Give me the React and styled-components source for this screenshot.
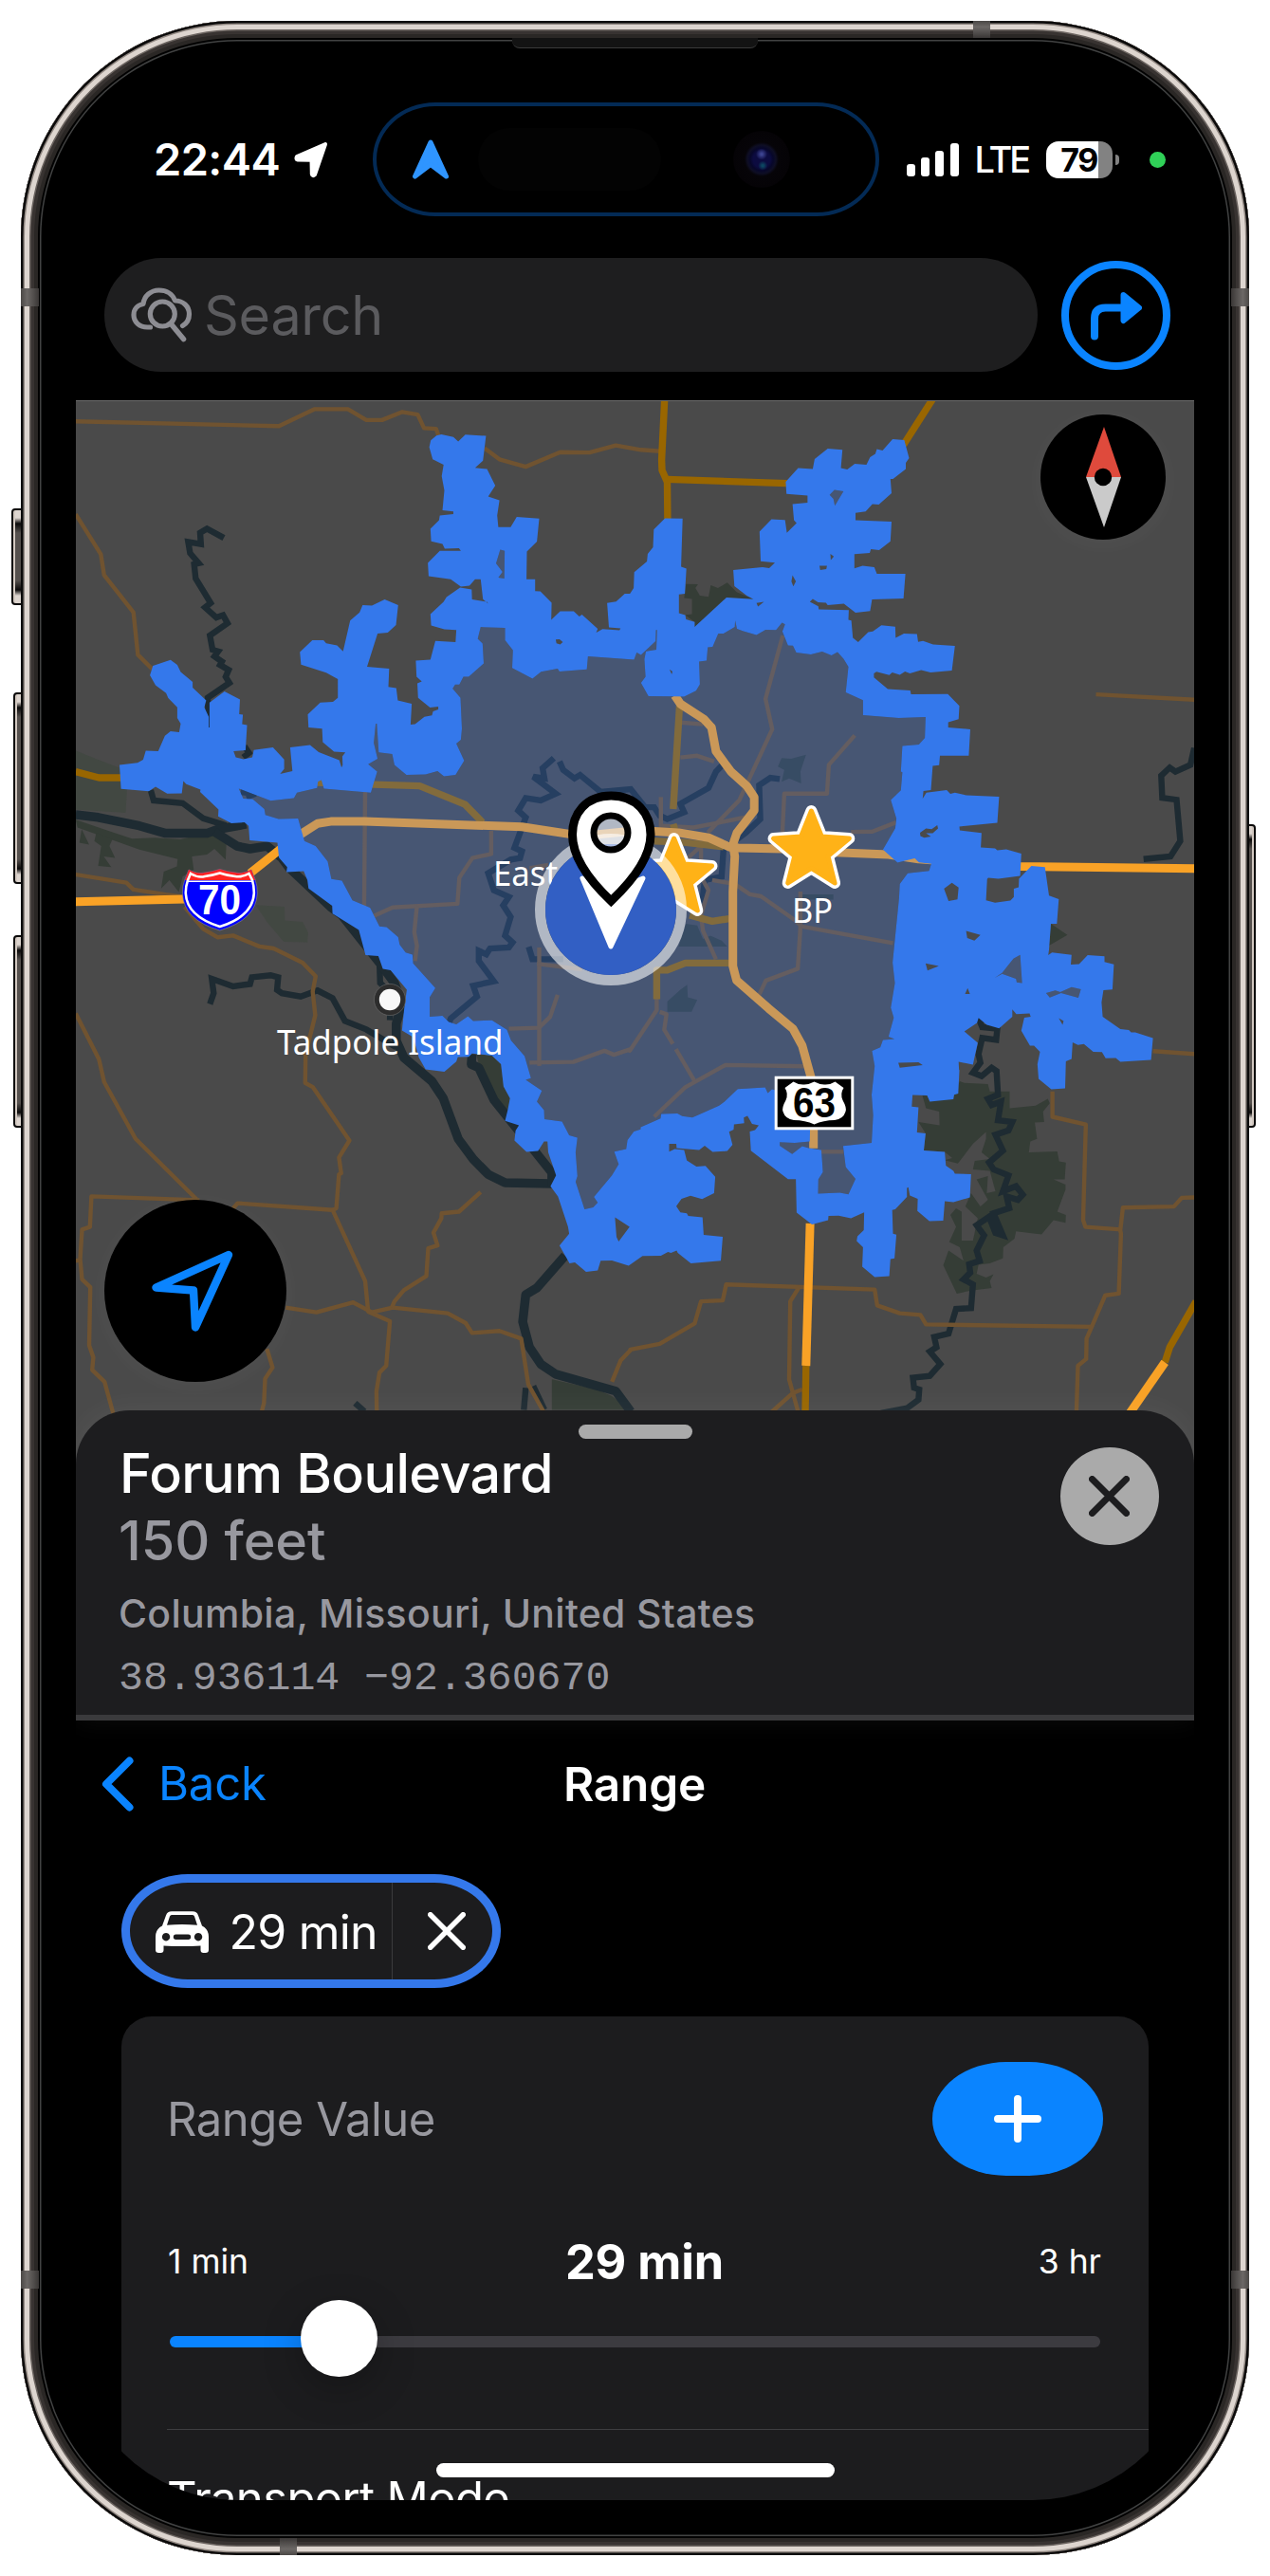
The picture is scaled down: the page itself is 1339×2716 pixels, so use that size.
import React from "react";
import styled, { createGlobalStyle } from "styled-components";

const BLUE = "#0a84ff";
const RANGE_BLUE = "#3478eb";

const GlobalStyle = createGlobalStyle`
  * { box-sizing: border-box; }
  body { margin: 0; background: #fff; font-family: Inter, "Liberation Sans", sans-serif; }
  button { border: 0; padding: 0; font: inherit; color: inherit; background: none; }
`;

/* ---------- device ---------- */

const Page = styled.main`
  position: relative;
  width: 1339px;
  height: 2716px;
  padding: 22px;
  overflow: hidden;
`;

const Phone = styled.div`
  position: relative;
  width: 1295px;
  height: 2672px;
  padding: 86px 58px 58px;
  border-radius: 228px;
  background: #000;
  box-shadow:
    inset 0 0 0 2.5px #0b0a0a,
    inset 0 0 0 4px #8f8680,
    inset 0 0 0 9px #ddd5cf,
    inset 0 0 0 10.5px #6b6460,
    inset 0 0 0 14px #383331,
    inset 0 0 0 18px #2a2725,
    inset 0 0 0 20px #020202,
    inset 0 0 0 21.5px #414242;
`;

const SideKey = styled.span`
  position: absolute;
  left: ${(p) => p.$x}px;
  top: ${(p) => p.$y}px;
  width: 16px;
  height: ${(p) => p.$h}px;
  border: 2px solid #0a0909;
  border-radius: 4px;
  background: linear-gradient(#ddd5cf 0 8px, #0a0909 14px, #55504d 24px, #55504d calc(100% - 24px), #0a0909 calc(100% - 14px), #ddd5cf calc(100% - 8px));
  box-shadow: inset ${(p) => (p.$right ? -2 : 2)}px 0 0 #d3c9c1;
`;

const Antenna = styled.span`
  position: absolute;
  left: ${(p) => p.$x}px;
  top: ${(p) => p.$y}px;
  width: ${(p) => (p.$vertical ? 18 : 19)}px;
  height: ${(p) => (p.$vertical ? 18 : 19)}px;
  background: linear-gradient(${(p) => p.$dir}, #4a4745, #6c6866 35%, #3a3736);
`;

const Earpiece = styled.span`
  position: absolute;
  left: 518px;
  top: 18px;
  width: 259px;
  height: 11px;
  border-radius: 0 0 8px 8px;
  background: #131313;
  border-bottom: 1.5px solid #3a3a3a;
`;

const Screen = styled.div`
  width: 1179px;
  height: 2528px;
  display: flex;
  flex-direction: column;
  overflow: hidden;
  border-radius: 0 0 170px 170px;
`;

/* ---------- status bar ---------- */

const StatusBar = styled.header`
  flex: none;
  height: 120px;
  display: flex;
  align-items: center;
  padding-left: 82px;
  color: #fff;
`;

const Clock = styled.span`
  width: 147px;
  font-size: 47px;
  line-height: 56px;
  font-weight: 600;
  letter-spacing: -0.6px;
  white-space: nowrap;
`;

const Island = styled.div`
  width: 534px;
  height: 120px;
  margin-left: 46px;
  padding-left: 38px;
  display: flex;
  align-items: center;
  border: 4.5px solid #032a55;
  border-radius: 66px / 60px;
`;

const Sensor = styled.span`
  width: 193px;
  height: 66px;
  margin-left: 31px;
  border-radius: 33px;
  background: #030303;
`;

const Lens = styled.span`
  width: 60px;
  height: 60px;
  margin-left: 76px;
  border-radius: 50%;
  background: radial-gradient(circle at 50% 41%, #3c4390 0 1px, transparent 6px),
    radial-gradient(circle at 52% 61%, #0d4560 0 1px, transparent 5px),
    radial-gradient(circle, #0c0b40 0 9px, #07072a 12px, #0e0e24 15px, #060408 18px, #050306 30px);
`;

const Bars = styled.div`
  display: flex;
  align-items: flex-end;
  gap: 6.2px;
  height: 35px;
  margin: 0 0 0 29px;
`;

const Bar = styled.span`
  width: 9px;
  height: ${(p) => p.$h}px;
  border-radius: 3px;
  background: #fff;
`;

const Carrier = styled.span`
  width: 59px;
  margin-left: 17px;
  font-size: 38px;
  line-height: 46px;
  font-weight: 500;
  letter-spacing: -3px;
  white-space: nowrap;
`;

const Battery = styled.div`
  position: relative;
  width: 70px;
  height: 39px;
  margin-left: 16px;
  border-radius: 13px;
  background: linear-gradient(90deg, #fff 79%, #828282 79%);
  color: #000;
  font-size: 34px;
  line-height: 39px;
  font-weight: 700;
  letter-spacing: -1.5px;
  text-align: center;
  &::after {
    content: "";
    position: absolute;
    right: -7px;
    top: 14px;
    width: 4px;
    height: 11px;
    border-radius: 0 4px 4px 0;
    background: #828282;
  }
`;

const CameraDot = styled.span`
  width: 17px;
  height: 17px;
  margin-left: 39px;
  border-radius: 50%;
  background: #30d158;
`;

/* ---------- search ---------- */

const SearchRow = styled.div`
  flex: none;
  height: 150px;
  margin-top: 44px;
  padding: 0 25px 0 30px;
  display: flex;
  align-items: flex-start;
  gap: 25px;
`;

const SearchField = styled.div`
  width: 984px;
  height: 120px;
  padding-left: 26px;
  display: flex;
  align-items: center;
  border-radius: 60px;
  background: #1e1e1f;
  color: #5b5b5e;
  font-size: 57.5px;
  letter-spacing: -0.3px;
`;

const SearchLabel = styled.span`
  margin-left: 11px;
`;

const RouteButton = styled.button`
  flex: none;
  width: 115px;
  height: 115px;
  margin-top: 3px;
  display: flex;
  align-items: center;
  justify-content: center;
  border: 8.5px solid ${BLUE};
  border-radius: 50%;
`;

/* ---------- map ---------- */

const MapArea = styled.section`
  position: relative;
  flex: none;
  height: 1140px;
  background: #4a4a4a;
  border-top: 1px solid #6a6a6a;
`;

const MapSvg = styled.svg`
  display: block;
  width: 1179px;
  height: 1139px;
`;

const RoundControl = styled.button`
  position: absolute;
  left: ${(p) => p.$x}px;
  top: ${(p) => p.$y}px;
  width: ${(p) => p.$size}px;
  height: ${(p) => p.$size}px;
  display: flex;
  align-items: center;
  justify-content: center;
  border-radius: 50%;
  background: #000;
  box-shadow: 0 4px 24px rgba(255, 255, 255, 0.04);
`;

/* ---------- place sheet ---------- */

const Sheet = styled.section`
  position: relative;
  flex: none;
  height: 327px;
  margin-top: -75px;
  padding-left: 46px;
  border-radius: 57px 57px 0 0;
  border-bottom: 6px solid #3a3a3c;
  background: #1d1d1f;
  box-shadow: 0 -2px 30px rgba(255, 255, 255, 0.06);
`;

const Grabber = styled.div`
  width: 120px;
  height: 15px;
  margin: 0 auto;
  position: relative;
  left: -23px;
  top: 15px;
  border-radius: 8px;
  background: #aaa;
`;

const SheetTop = styled.div`
  display: flex;
  justify-content: space-between;
  padding-right: 37.5px;
`;

const PlaceTitle = styled.h1`
  margin: 16px 0 0;
  font-size: 57.5px;
  line-height: 71.5px;
  font-weight: 500;
  letter-spacing: -0.6px;
  color: #fff;
`;

const Distance = styled.p`
  margin: -1px 0 0 -1px;
  font-size: 57.5px;
  line-height: 71.5px;
  font-weight: 500;
  letter-spacing: -0.1px;
  color: #98989f;
`;

const Address = styled.p`
  margin: 11px 0 0 -1px;
  font-size: 41px;
  line-height: 60px;
  font-weight: 500;
  letter-spacing: 0.28px;
  color: #98989f;
`;

const Coordinates = styled.p`
  margin: 9px 0 0 -1px;
  font-family: "Liberation Mono", monospace;
  font-size: 43.2px;
  line-height: 60px;
  color: #98989f;
`;

const CloseButton = styled.button`
  flex: none;
  width: 103.5px;
  height: 103.5px;
  margin-top: 23.5px;
  display: flex;
  align-items: center;
  justify-content: center;
  border-radius: 50%;
  background: #aaa;
`;

/* ---------- range panel ---------- */

const NavBar = styled.nav`
  flex: none;
  height: 132px;
  display: grid;
  grid-template-columns: 1fr auto 1fr;
  align-items: center;
  padding: 2px 28px 0 27px;
  font-size: 49px;
  line-height: 60px;
  color: #fff;
`;

const BackButton = styled.button`
  display: flex;
  align-items: center;
  gap: 26px;
  color: ${BLUE};
  letter-spacing: -0.2px;
`;

const NavTitle = styled.h2`
  margin: 0;
  font-size: 49.5px;
  font-weight: 600;
  letter-spacing: -0.2px;
`;

const Chip = styled.div`
  flex: none;
  width: 400px;
  height: 120px;
  margin: 30px 0 30px 48px;
  display: flex;
  border: 9px solid ${RANGE_BLUE};
  border-radius: 70px / 60px;
  background: #1c1c1e;
  color: #fff;
  font-size: 50px;
`;

const ChipMain = styled.div`
  width: 277px;
  padding: 2px 0 0 27px;
  display: flex;
  align-items: center;
  gap: 21.5px;
  border-right: 1px solid #3a3a3c;
  white-space: nowrap;
  letter-spacing: -0.8px;
`;

const ChipClose = styled.button`
  flex: 1;
  display: flex;
  align-items: center;
  justify-content: center;
  padding-left: 8px;
`;

const Card = styled.section`
  flex: none;
  width: 1083px;
  height: 600px;
  margin-left: 48px;
  padding: 48px 0 0 48px;
  border-radius: 32px 32px 0 0;
  background: #1c1c1e;
  color: #fff;
`;

const CardHeader = styled.div`
  display: flex;
  align-items: center;
  justify-content: space-between;
  padding-right: 48px;
  font-size: 49px;
  letter-spacing: -0.5px;
  color: #98989f;
`;

const AddButton = styled.button`
  width: 180px;
  height: 120px;
  display: flex;
  align-items: center;
  justify-content: center;
  border-radius: 78px / 60px;
  background: ${BLUE};
`;

const Scale = styled.div`
  display: grid;
  grid-template-columns: 1fr auto 1fr;
  align-items: center;
  height: 60px;
  margin-top: 60px;
  padding: 0 50px 0 1px;
  font-size: 35.5px;
`;

const ScaleValue = styled.strong`
  padding-left: 21px;
  font-size: 50.5px;
  font-weight: 700;
  letter-spacing: -0.1px;
`;

const ScaleEnd = styled.span`
  text-align: right;
`;

const SliderBox = styled.div`
  height: 81px;
  margin: 11px 51px 0 3px;
  padding-top: 38px;
  position: relative;
`;

const Track = styled.div`
  height: 12px;
  border-radius: 6px;
  background: linear-gradient(90deg, ${BLUE} 18%, #3c3b40 18%);
`;

const Thumb = styled.div`
  position: absolute;
  left: 138px;
  top: 0;
  width: 81px;
  height: 81px;
  border-radius: 50%;
  background: #fff;
  box-shadow: 0 12px 40px rgba(0, 0, 0, 0.25);
`;

const NextRow = styled.div`
  margin-top: 55px;
  padding: 43px 0 0;
  border-top: 1px solid #3d3d40;
  font-size: 49px;
  line-height: 60px;
  letter-spacing: -0.65px;
`;

const HomeBar = styled.span`
  position: absolute;
  left: 438px;
  top: 2575px;
  width: 420px;
  height: 15px;
  border-radius: 8px;
  background: #fff;
`;

/* ---------- map data: four survey tiles, each 1568 units across ---------- */

const tile = (ox, oy) => (pts) =>
  pts
    .trim()
    .split(/\s+/)
    .map((p) => {
      const [x, y] = p.split(",").map(Number);
      return `${(ox + x / 2.529).toFixed(1)},${(oy + y / 2.8).toFixed(1)}`;
    })
    .join(" ");

const NW = tile(60, 410);
const NE = tile(660, 410);
const SW = tile(60, 940);
const SE = tile(660, 940);
const line = (...parts) => "M" + parts.join(" ");

const outer =
  line(
    NW(`167,1110 215,1104 230,1095 237,1068 270,1070 288,1024 303,1011 326,1014 330,988 321,972 321,940 297,913 291,898 263,875 248,846 256,818 303,800 321,815 330,836 362,865 362,882 398,920 393,940 405,968 405,1000 407,1000 407,926 447,893 488,917 486,960 496,962 494,990 507,993 503,1067 471,1070 477,1088 497,1093 521,1088 525,1066 576,1058 606,1094 606,1122 595,1137 628,1128 622,1058 675,1051 698,1072 753,1096 759,1118 762,1110 761,1085 769,1073 739,1071 709,1043 707,1003 671,1000 669,961 702,926 736,924 749,912 749,857 718,838 651,814 648,777 681,742 711,742 718,751 747,757 763,775 782,684 807,660 815,638 840,640 874,622 910,638 904,697 882,720 855,722 827,820 886,826 884,880 905,883 909,920 946,930 943,991 955,990 980,968 1000,964 1003,952 1017,946 1017,938 995,941 963,912 961,869 973,864 959,850 957,802 996,799 1009,744 1063,748 1065,712 1033,710 998,699 996,665 1031,629 1039,615 1075,587 1106,592 1107,622 1147,629 1150,634 1136,621 1130,562 1115,562 1100,581 1077,584 1050,562 991,553 989,514 1021,478 1077,478 1072,470 1034,472 1028,458 998,450 996,413 1019,388 1021,374 1057,370 1057,362 1028,358 1033,300 1026,258 1031,224 1002,208 993,172 997,152 1012,138 1025,134 1057,142 1070,155 1089,135 1144,139 1136,212 1115,233 1147,237 1169,286 1150,318 1180,329 1174,374 1177,408 1210,408 1226,378 1286,383 1280,451 1253,480 1252,562 1275,562 1275,597 1289,598 1319,631 1318,682 1342,657 1378,657 1393,672 1400,666 1442,708 1438,720 1455,709 1500,713 1503,707 1472,704 1467,632 1491,628 1514,605 1528,605 1538,588`),
    NE(`22,541 56,510 58,487 72,468 74,415 104,382 151,383 147,525 161,531 157,605 141,607 141,662 158,668 160,680 183,688 183,703 268,616 340,621 322,610 289,582 286,535 364,526 382,529 397,513 359,509 356,421 388,385 424,387 429,425 455,396 448,388 444,340 484,336 484,315 428,310 426,274 459,234 498,237 503,207 538,176 577,180 573,234 590,238 610,221 641,224 651,202 665,192 669,178 684,182 711,148 742,151 755,204 746,218 746,237 712,266 705,266 708,308 674,342 657,340 639,362 612,366 612,388 708,392 705,450 675,476 653,473 650,484 609,488 609,530 631,522 662,526 669,546 745,546 740,619 656,622 651,656 612,661 581,634 538,638 533,631 512,630 498,620 490,629 513,642 514,651 594,653 593,682 601,684 605,735 619,748 646,718 658,716 681,698 718,702 719,735 741,722 776,724 779,747 792,744 819,755 877,759 869,832 812,837 787,830 757,840 744,834 730,844 710,837 702,845 668,835 661,840 661,852 698,886 758,890 760,902 858,901 889,936 887,975 859,984 859,1000 918,1005 914,1083 837,1083 835,1111 818,1113 813,1184 793,1187 791,1210 801,1192 855,1184 865,1196 877,1192 908,1200 995,1204 990,1281 889,1292 890,1303 948,1311 946,1354 984,1357 990,1362 1014,1359 1054,1372 1051,1438 993,1446 966,1443 963,1447 960,1510 984,1517 1025,1511 1034,1500 1034,1476 1047,1471 1048,1446 1081,1408 1117,1412 1128,1496 1154,1506`),
    SE(`1149,95 1133,95 1128,172 1126,188 1136,180 1188,187 1186,216 1208,214 1231,188 1276,191 1276,208 1301,215 1297,289 1273,291 1268,327 1271,370 1318,406 1341,409 1347,416 1358,416 1405,433 1400,497 1318,503 1306,491 1279,492 1269,474 1246,473 1221,450 1205,453 1191,445 1188,494 1173,501 1171,581 1134,584 1100,553 1097,510 1104,473 1088,455 1077,455 1054,411 1062,372 1079,370 1076,360 1041,362 1030,348 1030,370 995,404 962,393 940,373 936,388 902,413 938,447 925,511 887,503 888,525 889,528 886,596 875,600 873,613 810,620 803,602 764,601 762,635 780,637 776,711 799,714 794,764 850,769 853,809 873,825 877,833 920,834 917,903 873,917 850,914 846,972 809,973 777,943 778,907 757,897 753,873 749,875 749,902 718,938 710,940 712,1010 721,1013 716,1083 705,1085 702,1135 663,1138 630,1107 632,1050 615,1032 617,1018 634,1000 635,947 600,965 567,957 540,958 539,970 496,983 455,948 453,849 432,849 333,765 330,708 344,704 354,690 336,686 324,662 314,667 315,684 288,687 287,703 275,709 284,748 270,766 231,769 210,750 195,763 135,757 134,745 115,745 115,768 130,760 155,763 162,794 188,812 212,810 238,842 235,890 203,908 172,898 148,907 134,929 145,947 162,950 166,958 204,962 207,1014 258,1019 253,1090 173,1098 138,1067 135,1060 120,1067 112,1064 93,1075 44,1076 7,1105`),
    SW(`1480,1089 1450,1090 1442,1119 1411,1123 1381,1095 1367,1098 1340,1045 1366,1010 1363,990 1336,900 1316,870 1331,838 1310,770 1308,738 1299,738 1283,766 1252,769 1220,735 1223,706 1232,690 1195,677 1202,645 1208,610 1191,575 1184,510 1160,484 1107,478 1098,488 1069,489 1065,502 1033,532 983,525 965,490 950,430 920,410 926,345 933,290 890,232 869,228 857,190 823,188 805,113 735,65`),
    NW(`734,1526 671,1475 668,1450 658,1424 612,1427 614,1412 592,1384 588,1340 514,1333 511,1290 500,1280 465,1282 430,1262 431,1242 382,1190 383,1183 345,1167 337,1158 333,1194 294,1195 263,1175 245,1188 171,1181`)
  ) + "Z";

const inner =
  line(
    NW(`485,1180 570,1216 632,1208 640,1192 694,1178 696,1160 705,1155 712,1180 837,1192 854,1130 830,1108 855,1092 845,1045 850,988 853,988 858,1073 894,1078 900,1110 932,1140 983,1138 1015,1128 1032,1144 1063,1140 1086,1098 1065,1047 1077,1036 1080,1003 1076,912 1055,885 1062,873 1073,873 1084,850 1098,850 1138,811 1135,752 1122,738 1130,703 1195,706 1195,742 1216,771 1214,824 1268,855 1291,835 1335,826 1340,834 1413,828 1416,790 1539,799 1546,778`),
    NE(`40,785 79,745 80,712 83,712 81,770 53,775 49,798 52,850 40,868 60,907 122,908 155,909 187,891 197,872 195,805 215,802 218,763 231,762 246,722 260,722 290,703 291,684 296,708 313,715 348,727 372,711 400,712 416,690 424,695 417,716 432,757 445,758 454,778 493,784 523,776 548,787 564,777 580,797 593,820 586,896 632,919 632,963 727,972 799,969 797,1030 781,1050 737,1054 733,1130 737,1132 733,1185 706,1214 721,1268 718,1297 685,1360 724,1399 770,1386 781,1398 814,1402 808,1423 751,1430 730,1462`),
    SE(`728,20 711,210 717,270 706,343 714,372 700,428 716,435 685,438 678,460 656,470 663,515 655,600 659,660 655,742 579,751 586,813 612,848 593,894 570,889 512,892 513,850 525,828 521,763 487,757 470,752 443,775 410,750 410,740 450,742 490,738 492,640 397,586 389,584 378,595 371,578 298,583 262,621 248,632 207,652 177,667 150,663 137,655 94,657 92,670 39,696 39,702 21,708 4,734`),
    SW(`1518,760 1486,768 1498,805 1480,838 1432,902 1442,918 1430,932 1407,938 1383,857 1388,840 1383,770 1388,727 1366,720 1347,679 1300,672 1299,645 1280,620 1293,588 1250,556 1264,551 1247,486 1211,440 1200,408 1160,380 1110,382 1096,368 1065,392 1045,385 1028,367 994,370 994,312 1009,285 950,212 948,186 930,180 914,157 910,134 879,105 860,103`),
    NW(`835,1532 788,1510 760,1452 732,1447 722,1395 690,1350 660,1335 643,1268 591,1270 556,1258 553,1240 522,1211 497,1210`)
  ) + "Z";

const tintedHoles = [
  NW("1182,475 1194,478 1193,560 1177,557 1188,540 1171,515"),
  NE("543,313 556,298 580,302 557,345 553,325"),
  SE("983,255 1003,240 1033,198 1051,187 1056,270 1042,268 1040,258 1003,243"),
  SE("1120,300 1145,292 1158,297 1188,282 1213,288 1206,314 1160,300 1130,313"),
].map((p) => `M${p}Z`).join("");

const clearHoles = [
  NW("1330,740 1340,739 1349,748 1342,755 1332,751"),
  NE("848,1476 869,1458 887,1472 884,1507 860,1512"),
  NE("784,1310 800,1298 815,1300 830,1288 832,1298 818,1312 800,1312 813,1322 795,1325 785,1320"),
  NE("516,522 536,522 534,532 518,535"),
  NE("545,487 554,495 546,505"),
  NE("444,550 453,568 446,583 441,568"),
  NE("348,632 368,629 352,643"),
  NE("116,828 124,834 122,843"),
  SE("907,116 945,128 929,145 910,137"),
  SE("799,212 834,220 804,233"),
  SE("911,285 917,302 904,302"),
  SE("1154,374 1167,382 1164,393"),
  SE("726,505 780,504 791,512 730,520"),
  SW("1488,962 1527,990 1498,1033 1492,1020"),
].map((p) => `M${p}Z`).join("");

const darkGreens = [
  NW("50,1272 130,1302 200,1328 260,1325 330,1330 400,1310 452,1340 450,1390 420,1358 400,1375 360,1380 365,1420 335,1440 325,1485 300,1450 278,1475 285,1425 320,1410 322,1388 220,1360 55,1295"),
  NW("105,1310 148,1330 140,1350 155,1385 125,1380 145,1412 110,1408 118,1350 100,1335"),
  NW("66,1300 86,1345 60,1340"),
  NE("160,576 192,577 185,588 197,610 220,614 226,580 245,588 270,572 295,600 340,621 268,616 183,703 183,688 158,668 176,665 176,620 155,617"),
  SE("902,565 965,568 970,590 1023,590 1023,640 1092,632 1125,612 1130,625 1112,650 1115,680 1090,682 1096,730 1078,738 1074,770 1150,767 1155,797 1173,800 1170,850 1140,850 1172,865 1172,880 1150,945 1173,955 1172,978 1140,970 1108,1012 1040,1003 1036,1025 1006,1050 1005,1083 970,1098 940,1102 935,1128 960,1140 980,1130 970,1150 975,1170 920,1178 882,1187 846,1103 860,1060 900,1090 890,1050 862,1035 880,990 865,955 880,935 895,945 895,1030 925,1030 938,965 905,930 920,890 945,930 965,910 935,850 965,840 962,890 985,885 970,825 925,820 930,795 970,790 948,770 960,730 960,710 925,745 885,803 850,793 870,787 850,769 794,764 799,714 780,680 836,690 835,650 800,640 790,601 870,613 890,560"),
  SE("1133,95 1177,128 1128,160"),
  SW("1118,478 1160,484 1184,510 1191,575 1208,610 1202,655 1165,610 1125,510"),
  SW("1320,1440 1440,1470 1480,1490 1530,1530 1320,1530"),
  NE("415,1090 440,1092 480,1080 465,1130 467,1165 435,1150 415,1160 422,1125 405,1115"),
  SE("110,355 110,325 145,290 163,275 165,312 190,320 175,355"),
  SE("160,95 190,100 205,140 225,130 255,145 270,162 140,162"),
  NE("470,1492 553,1492 553,1508 470,1508"),
];

const lightGreens = [
  NW("50,1068 110,1095 170,1120 187,1185 183,1252 50,1242"),
  SW("530,40 607,45 608,85 655,90 670,120 668,150 605,148 560,90"),
];

const streams = [
  line(NW("445,440 400,413 382,425 384,458 350,452 355,485 378,515 366,518 370,560 410,632 395,645 425,675 443,668 455,692 408,728 415,770 430,775 420,790 440,805 435,815 458,830 450,850 460,868 402,912 405,1000")),
  line(NW("500,1055 512,1075 497,1088")),
  line(NW("250,1185 258,1215 335,1223 390,1268 440,1285 430,1300")),
  line(NW("490,1190 530,1195 505,1205")),
  line(SW("408,332 418,300 413,258 470,280 515,273 520,253 570,247 590,253 587,290 600,300 650,310 695,292 735,315 768,382 825,407 905,460")),
  line(SW("860,210 862,270 890,300 888,380")),
  line(SW("1250,1465 1245,1530")),
  line(SW("1270,1460 1300,1530")),
  line(SW("795,1510 820,1535")),
  line(NW("1325,1090 1295,1120 1300,1150 1270,1145 1330,1195 1290,1215 1250,1208 1230,1245 1250,1265 1220,1355 1240,1365 1235,1385 1210,1390 1150,1430 1165,1480 1205,1500 1190,1525"), SW("1210,75 1195,130 1215,150 1205,165 1155,168 1145,185 1125,175 1125,205 1165,265 1110,278 1120,310 1050,375 1045,390")),
  line(NW("1340,1100 1350,1125 1380,1150 1395,1140 1450,1190 1530,1182 1568,1235"), NE("75,1235 90,1260 110,1270 155,1250 145,1225 220,1178 240,1130 270,1095")),
  line(NE("410,1152 385,1148 355,1170 358,1270 320,1310 260,1360 255,1440 210,1450 205,1500 180,1540")),
  line(SW("1258,163 1268,200 1350,200")),
  line(NE("1515,1060 1505,1110 1465,1130 1450,1118 1427,1142 1430,1207 1468,1213 1478,1335 1452,1380 1380,1388")),
  line(SE("940,373 950,400 990,405 987,438 950,432 940,480 945,505 925,535 948,545 975,520 988,530 992,600 965,612 975,630 1000,620 992,675 1030,680 1020,705 985,718 1005,765 968,800 980,820 1020,838 1005,885 1040,870 1058,895 1045,910 1015,900 1022,935 980,950 1005,1015 985,1008 968,960 935,985 955,1015 935,1060 943,1090 915,1100 918,1125 900,1145 925,1160 920,1230 880,1232 860,1305 822,1315 828,1345 810,1358 838,1395 810,1430 765,1435 768,1465 782,1470 780,1500 750,1525 680,1540")),
];

const rivers = [
  line(NW("50,1257 110,1265 220,1290 290,1312 400,1312 430,1300 505,1285")),
  line(NW("420,1308 480,1350 515,1358 560,1350 600,1385 620,1415 730,1530"), SW("760,70 860,210 900,270 920,330 905,390 905,440 925,490 1000,560 1030,610 1070,730 1110,790 1150,835 1195,860 1320,862")),
  line(SW("1107,480 1105,510 1125,520 1165,615 1320,830 1320,870")),
  line(SW("1355,1075 1280,1170 1250,1190 1242,1270 1260,1345 1290,1395 1330,1425 1490,1475 1530,1535")),
];

const minorRoads = [
  line(NW("50,96 592,110 686,60 776,60 825,92 867,92 921,68 962,76 979,116 1011,118 1018,140")),
  line(NW("1140,175 1180,208 1250,230 1342,187 1420,188 1490,167"), NE("40,180 92,184")),
  line(NW("50,370 117,488 126,550 204,660 216,785 255,828")),
  line(NW("50,1434 185,1458 204,1478 290,1493 340,1500")),
  line(SW("340,45 390,110 428,135 470,130 540,162 578,168 655,210 690,250 682,295 689,365 663,480 662,565 682,577 780,735 752,785 758,832 752,835 745,935 735,940")),
  line(NW("822,1190 819,1570 845,1556 895,1531 1068,1520 1073,1443 1108,1385 1158,1373 1158,1305")),
  line(SW("960,42 953,120 960,160 955,205")),
  line(NW("1260,1415 1310,1405")),
  line(NE("418,728 372,915 390,1005 302,1215 218,1310")),
  line(NE("145,985 205,990")),
  line(NE("145,1088 190,1083 235,1100")),
  line(NE("610,1023 541,1110 536,1195 422,1195 417,1310")),
  line(NE("600,1308 657,1307 720,1280")),
  line(NE("93,1205 93,1300")),
  line(NE("95,1290 180,1295 250,1280 340,1260")),
  line(NE("165,1385 200,1350 200,1440 220,1480"), SE("200,70 205,115 240,200")),
  line(NE("230,1450 290,1462 330,1492 360,1498 450,1568"), SE("465,100")),
  line(NE("1253,902 1520,918")),
  line(SE("465,0 465,105 458,228 373,263 355,305")),
  line(SE("470,103 712,152")),
  line(SE("82,315 82,350 10,470"), SW("1530,465 1485,482 1460,470 1377,503 1260,505")),
  line(SE("90,355 108,362 102,408 125,450")),
  line(SE("133,465 183,560")),
  line(SE("480,516 265,512 158,578 75,665")),
  line(SE("520,768 580,768")),
  line(SW("1286,165 1286,515")),
  line(SW("1205,405 1285,402 1315,370 1335,305")),
  line(SW("1280,213 1400,230")),
  line(SW("50,360 112,495 126,562 210,730 372,908")),
  line(SW("150,1540 127,1447 94,1412 97,1375 86,1340 89,1168 67,1145 62,1085 67,998 88,990 92,900 380,911")),
  line(SW("50,1090 62,1088")),
  line(SW("470,935 482,920 735,940 822,1150 830,1240 888,1268 878,1400 860,1420 852,1475 853,1540")),
  line(SW("610,1228 692,1242 790,1213 840,1242 895,1228 1042,1245 1090,1274 1107,1303 1180,1297 1238,1320 1257,1455 1300,1540")),
  line(SW("893,1228 900,1210 925,1177 985,1135 990,1053 1015,1045 1004,1007 1025,965 1026,950 1072,945 1130,887")),
  line(SW("560,1350 575,1405 555,1438 552,1510 545,1540")),
  line(SW("1480,1447 1503,1385 1530,1353"), SE("12,1352 90,1335 183,1275 200,1210 258,1207 267,1160 663,1175 670,1222 730,1245 785,1250 800,1278 1243,1285")),
  line(SE("463,1165 438,1210 435,1440 460,1540")),
  line(SE("385,1540 445,1480 470,1470")),
  line(SE("1405,471 1520,480")),
  line(SE("1137,590 1137,665 1226,688 1219,970 1225,990 1320,998")),
  line(SE("1520,903 1482,904 1461,930 1325,933 1318,1000 1320,1010 1314,1187 1278,1192 1240,1290 1228,1320 1227,1380 1205,1400 1201,1540")),
];

const highways = [
  line(NW("50,1130 112,1148 175,1148")),
  line(NW("690,1162 845,1168 967,1172 1088,1227 1135,1280")),
  line(NE("103,30 95,210 96,240 110,275 111,390")),
  line(NE("110,267 430,279")),
  line(NE("818,30 740,165")),
  line(NE("143,935 126,1240")),
  line(NE("126,1285 130,1300")),
  line(NE("75,1335 150,1338 260,1352")),
  line(SE("170,70 230,88 275,80")),
  line(SE("82,318 82,232 110,232 158,211 280,211")),
  line(SE("480,1400 478,1540")),
  line(SE("1520,1210 1450,1345 1437,1390")),
];

const motorways = [
  line(NW("50,1514 340,1506")),
  line(NW("515,1430 600,1355 650,1315 695,1283 730,1277 820,1277 1240,1293 1400,1320"), NE("20,1305 75,1306 140,1310 220,1325 275,1352 300,1355 420,1358 480,1365 700,1375 780,1388 1050,1410 1520,1416")),
  line(NE("130,905 145,930 208,975 228,1000 240,1070 280,1130 322,1172 342,1205 342,1245 296,1310 285,1345 290,1380"), SE("285,0 285,220 295,262 380,345 445,405 470,455 500,575 500,758")),
  line(SE("491,980 480,1400")),
  line(SE("1437,1390 1340,1545")),
];

const starPoints = (cx, cy) =>
  Array.from({ length: 10 }, (_, i) => {
    const r = i % 2 ? 18.5 : 42;
    const a = (Math.PI / 5) * i - Math.PI / 2;
    return `${(cx + r * Math.cos(a)).toFixed(1)},${(cy + r * Math.sin(a)).toFixed(1)}`;
  }).join(" ");

function Star({ cx, cy }) {
  const pts = starPoints(cx, cy);
  return (
    <g strokeLinejoin="round">
      <polygon points={pts} fill="#fff" stroke="#fff" strokeWidth="12" />
      <polygon points={pts} fill="#ffb217" stroke="#ffb217" strokeWidth="5" />
    </g>
  );
}

function Interstate() {
  return (
    <g>
      <path d="M199 917 Q208 922 216 920 Q224 919 231.7 916.5 Q239 919 248 920 Q256 922 265 917 L269 927 Q271.5 934 271.3 942 Q270 970 231.8 981 Q193.5 970 192.4 942 Q192 934 195 927Z" fill="#00f" stroke="#888" strokeWidth="0.6" />
      <path d="M199 917 Q208 922 216 920 Q224 919 231.7 916.5 Q239 919 248 920 Q256 922 265 917 L269 928 L195 928Z" fill="#ff2424" />
      <path d="M201 921 Q209 926 216 924 Q224 923 231.7 920.5 Q239 923 248 924 Q256 925 262.5 921 L266 928 Q268 935 267.8 942 Q266.5 966 231.8 977 Q197 966 195.8 942 Q195.6 935 198 928Z" fill="none" stroke="#fff" strokeWidth="2.6" />
      <path d="M197 929.3 H267" stroke="#fff" strokeWidth="1.4" />
      <text x="209" y="963.5" fontFamily="Liberation Sans, sans-serif" fontWeight="700" fontSize="43.5" fill="#fff" textLength="45" lengthAdjust="spacingAndGlyphs">70</text>
    </g>
  );
}

function UsRoute() {
  return (
    <g>
      <rect x="818.2" y="1136.2" width="80.6" height="53.6" fill="#000" stroke="#fff" strokeWidth="3" />
      <path
        d="M836.5 1140.5 Q842 1144 848 1143.5 Q854 1143 858.5 1140.5 Q863 1143 869 1143.5 Q875 1144 880.5 1140.5 L889.5 1147 Q885.5 1153 888.5 1160 Q893 1168 891.5 1172 Q889 1180 880 1181 Q868 1181 858.5 1185.5 Q849 1181 837 1181 Q828 1180 825.5 1172 Q824 1168 828.5 1160 Q831.5 1153 827.5 1147Z"
        fill="#fff"
      />
      <text x="836" y="1177.5" fontFamily="Liberation Sans, sans-serif" fontWeight="700" fontSize="44" textLength="45" lengthAdjust="spacingAndGlyphs">63</text>
    </g>
  );
}

function MapDrawing() {
  return (
    <MapSvg viewBox="80 423 1179 1139">
      <g fill="#424842">{lightGreens.map((p, i) => <polygon key={i} points={p} />)}</g>
      <g fill="#353d36">{darkGreens.map((p, i) => <polygon key={i} points={p} />)}</g>
      <g fill="none" stroke="#1e2b32" strokeLinejoin="round">
        <g strokeWidth="6.4" strokeLinejoin="miter">{streams.map((d, i) => <path key={i} d={d} />)}</g>
        <g strokeWidth="9.5">{rivers.map((d, i) => <path key={i} d={d} />)}</g>
      </g>
      <g fill="none" strokeLinejoin="round">
        <g stroke="#705330" strokeWidth="4.4">{minorRoads.map((d, i) => <path key={i} d={d} />)}</g>
        <g stroke="#996600" strokeWidth="7.4">{highways.map((d, i) => <path key={i} d={d} />)}</g>
        <g stroke="#f9a226" strokeWidth="9">{motorways.map((d, i) => <path key={i} d={d} />)}</g>
      </g>
      <path d={inner + tintedHoles} fill="#3e7af0" fillOpacity="0.25" />
      <path d={outer + inner + tintedHoles + clearHoles} fill={RANGE_BLUE} fillRule="evenodd" />

      <Interstate />
      <UsRoute />
      <g fontFamily="Noto Sans, sans-serif" fill="#fff">
        <text x="520" y="933.5" fontSize="36.5" textLength="68" lengthAdjust="spacingAndGlyphs">East</text>
        <text x="835" y="972.5" fontSize="35.5" textLength="43" lengthAdjust="spacingAndGlyphs">BP</text>
      </g>
      <Star cx={855.4} cy={897} />
      <Star cx={710.6} cy={926} />

      <circle cx="644" cy="959" r="74.5" fill="none" stroke="#fff" strokeOpacity="0.58" strokeWidth="11" />
      <circle cx="644" cy="959" r="69" fill="#325fc4" />
      <path d="M614 926 L644 940 L678 926 L644 998Z" fill="#fff" stroke="#fff" strokeWidth="5" strokeLinejoin="round" />
      <circle cx="644" cy="878" r="17" fill="#fff" fillOpacity="0.58" />
      <path
        fillRule="evenodd"
        d="M644.3 839 C617.5 839 603.5 858 603.5 880 C603.5 902 620 927 644.3 950 C668.5 927 686 902 686 880 C686 858 671 839 644.3 839Z M644 860 a18 18 0 1 1 -0.1 0Z"
        fill="#fff"
      />
      <path
        d="M644.3 839 C617.5 839 603.5 858 603.5 880 C603.5 902 620 927 644.3 950 C668.5 927 686 902 686 880 C686 858 671 839 644.3 839Z"
        fill="none"
        stroke="#000"
        strokeWidth="9"
      />
      <circle cx="644" cy="878" r="18" fill="none" stroke="#000" strokeWidth="7" />

      <circle cx="411" cy="1054" r="16.6" fill="#2d2d2d" stroke="#707070" strokeWidth="0.6" />
      <circle cx="411" cy="1054" r="11.2" fill="#f8f8f8" />
      <text x="292" y="1112" fontFamily="Noto Sans, sans-serif" fontSize="37" fill="#fff" textLength="238.500" lengthAdjust="spacingAndGlyphs">Tadpole Island</text>
    </MapSvg>
  );
}

/* ---------- icons ---------- */

const Cross = ({ size, stroke, color }) => (
  <svg width={size} height={size} viewBox={`0 0 ${size} ${size}`}>
    <path d={`M${stroke / 2} ${stroke / 2} L${size - stroke / 2} ${size - stroke / 2} M${size - stroke / 2} ${stroke / 2} L${stroke / 2} ${size - stroke / 2}`} stroke={color} strokeWidth={stroke} strokeLinecap="round" />
  </svg>
);

const CloudSearchIcon = () => (
  <svg width="68" height="64" viewBox="136 300 68 64" fill="none" stroke="#8d8d93" strokeLinecap="round" strokeLinejoin="round">
    <path d="M158.5 345 H155.5 C147 345 141 339.5 141 332 C141 326 145 321.5 151 320.5 C152 312 159 306 167.5 306 C175.5 306 182 310 184.5 317 C193 317 199.5 323 199.5 331 C199.5 337 197 341 192.5 343.5" strokeWidth="5.2" />
    <circle cx="171.3" cy="331" r="13" strokeWidth="5.2" />
    <path d="M181.5 343 L193.5 357.5" strokeWidth="5.6" />
  </svg>
);

const TurnIcon = () => (
  <svg width="54" height="54" viewBox="1152 304 54 54">
    <path d="M1156 352.5 V334 Q1156 322.5 1167.5 322.5 H1188" fill="none" stroke={BLUE} strokeWidth="8" strokeLinecap="round" />
    <path d="M1186.5 309 L1203 322.5 L1186.5 336Z" fill={BLUE} stroke={BLUE} strokeWidth="6" strokeLinejoin="round" />
  </svg>
);

const CarIcon = () => (
  <svg width="56" height="44" viewBox="0 0 56 44">
    <path
      fill="#fff"
      fillRule="evenodd"
      d="M7 15.5 L11 4.5 Q12.5 0.3 17 0.3 H39 Q43.5 0.3 45 4.5 L49 15.5 Q56 19 56 27 V41 Q56 44 52.5 44 H50.5 Q47.5 44 47.5 41 V36.5 Q28 37.5 8.5 36.5 V41 Q8.5 44 5.5 44 H3.5 Q0 44 0 41 V27 Q0 19 7 15.5Z M12 14.8 Q28 13.3 44 14.8 L41 5.5 Q40.5 4 39 4 H17 Q15.5 4 15 5.5Z M11 23 a4.2 4.2 0 1 0 0.1 0Z M45 23 a4.2 4.2 0 1 0 0.1 0Z M21.5 24.5 H34.5 a2.7 2.7 0 0 1 0 5.4 H21.5 a2.7 2.7 0 0 1 0 -5.4Z"
    />
  </svg>
);

export default function App() {
  return (
    <Page>
      <GlobalStyle />
      <SideKey $x={12} $y={536} $h={102} />
      <SideKey $x={14} $y={730} $h={202} />
      <SideKey $x={14} $y={986} $h={203} />
      <SideKey $x={1308} $y={869} $h={320} $right />
      <Phone>
        <Earpiece />
        <Antenna $vertical $dir="180deg" $x={1004} $y={0} />
        <Antenna $vertical $dir="0deg" $x={273} $y={2654} />
        <Antenna $dir="90deg" $x={0} $y={282} />
        <Antenna $dir="270deg" $x={1276} $y={282} />
        <Antenna $dir="90deg" $x={0} $y={2372} />
        <Antenna $dir="270deg" $x={1276} $y={2372} />
        <Screen>
          <StatusBar>
            <Clock>22:44</Clock>
            <svg width="38" height="40" viewBox="0 0 38 40">
              <path d="M34 4 L4 17 Q2.5 20 5 20.5 L19.5 20.8 L19.8 35.5 Q20.5 38.5 23 36Z" fill="#fff" stroke="#fff" strokeWidth="4" strokeLinejoin="round" />
            </svg>
            <Island>
              <svg width="38" height="42" viewBox="0 0 38 42">
                <path d="M19 3 L35.5 39 L19 26.5 L2.5 39Z" fill="#2f95ff" stroke="#2f95ff" strokeWidth="5" strokeLinejoin="round" />
              </svg>
              <Sensor />
              <Lens />
            </Island>
            <Bars>
              <Bar $h={13} />
              <Bar $h={20} />
              <Bar $h={27} />
              <Bar $h={35} />
            </Bars>
            <Carrier>LTE</Carrier>
            <Battery>79</Battery>
            <CameraDot />
          </StatusBar>

          <SearchRow>
            <SearchField>
              <CloudSearchIcon />
              <SearchLabel>Search</SearchLabel>
            </SearchField>
            <RouteButton>
              <TurnIcon />
            </RouteButton>
          </SearchRow>

          <MapArea>
            <MapDrawing />
            <RoundControl $x={1017} $y={14} $size={132}>
              <svg width="40" height="106" viewBox="-0.5 0 40 106">
                <path d="M20.5 0 L38.5 53 H1.5Z" fill="#df4a3c" />
                <path d="M20.5 106 L38.5 53 H1.5Z" fill="#cacaca" />
                <circle cx="19.5" cy="53" r="9.2" fill="#000" />
              </svg>
            </RoundControl>
            <RoundControl $x={30} $y={842} $size={192}>
              <svg width="92" height="88" viewBox="160 1317 92 88">
                <path d="M241 1323 L164.5 1357.5 L204 1360.5 L206 1399.5Z" fill="none" stroke={BLUE} strokeWidth="8.4" strokeLinejoin="round" />
              </svg>
            </RoundControl>
          </MapArea>

          <Sheet>
            <Grabber />
            <SheetTop>
              <div>
                <PlaceTitle>Forum Boulevard</PlaceTitle>
                <Distance>150 feet</Distance>
              </div>
              <CloseButton>
                <Cross size={43} stroke={7} color="#1d1d1f" />
              </CloseButton>
            </SheetTop>
            <Address>Columbia, Missouri, United States</Address>
            <Coordinates>38.936114 −92.360670</Coordinates>
          </Sheet>

          <NavBar>
            <BackButton>
              <svg width="34" height="58" viewBox="0 0 34 58">
                <path d="M29.5 4.5 L5 29 L29.5 53.5" fill="none" stroke={BLUE} strokeWidth="8" strokeLinecap="round" strokeLinejoin="round" />
              </svg>
              Back
            </BackButton>
            <NavTitle>Range</NavTitle>
          </NavBar>

          <Chip>
            <ChipMain>
              <CarIcon />
              29 min
            </ChipMain>
            <ChipClose>
              <Cross size={40} stroke={5.5} color="#fff" />
            </ChipClose>
          </Chip>

          <Card>
            <CardHeader>
              <span>Range Value</span>
              <AddButton>
                <svg width="50" height="50" viewBox="0 0 50 50">
                  <path d="M4 25 H46 M25 4 V46" stroke="#fff" strokeWidth="8" strokeLinecap="round" />
                </svg>
              </AddButton>
            </CardHeader>
            <Scale>
              <span>1 min</span>
              <ScaleValue>29 min</ScaleValue>
              <ScaleEnd>3 hr</ScaleEnd>
            </Scale>
            <SliderBox>
              <Track />
              <Thumb />
            </SliderBox>
            <NextRow>Transport Mode</NextRow>
          </Card>
        </Screen>
        <HomeBar />
      </Phone>
    </Page>
  );
}
